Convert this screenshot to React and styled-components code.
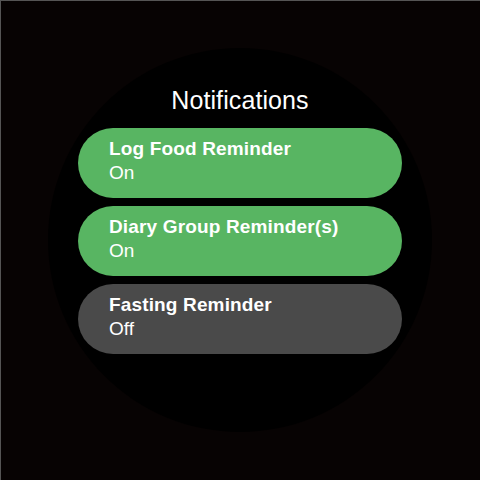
import React from 'react'
import styled, { createGlobalStyle } from 'styled-components'

const GlobalStyle = createGlobalStyle`
    html, body {
        margin: 0;
        padding: 0;
        background: #070303;
    }
    * {
        box-sizing: border-box;
    }
`

const Screen = styled.div`
    width: 480px;
    height: 480px;
    background-color: #070303;
    box-shadow: inset 1px 1px 0 #555555;
    display: flex;
    align-items: center;
    justify-content: center;
    font-family: "Liberation Sans", Arial, sans-serif;
`

const WatchFace = styled.div`
    width: 384px;
    height: 384px;
    border-radius: 50%;
    background-color: #000000;
    display: flex;
    flex-direction: column;
    align-items: center;
    padding-top: 38px;
`

const Title = styled.h1`
    margin: 0 0 14px;
    color: #ffffff;
    font-size: 25px;
    font-weight: 400;
    line-height: 28px;
    letter-spacing: 0.1px;
`

const List = styled.div`
    display: flex;
    flex-direction: column;
    gap: 8px;
`

const Chip = styled.button`
    width: 324px;
    height: 70px;
    border: none;
    border-radius: 35px;
    padding: 9px 31px 0;
    display: flex;
    flex-direction: column;
    align-items: flex-start;
    background-color: ${props => (props.$enabled ? '#58b562' : '#4a4a4a')};
    color: #ffffff;
    font-family: inherit;
    text-align: left;
    cursor: pointer;
`

const Label = styled.span`
    font-size: 19px;
    font-weight: 700;
    line-height: 24px;
    letter-spacing: 0.15px;
`

const Value = styled.span`
    font-size: 19px;
    font-weight: 400;
    line-height: 24px;
`

const reminders = [
    { label: 'Log Food Reminder', enabled: true },
    { label: 'Diary Group Reminder(s)', enabled: true },
    { label: 'Fasting Reminder', enabled: false },
]

export default function App() {
    return (
        <>
            <GlobalStyle />
            <Screen>
                <WatchFace>
                    <Title>Notifications</Title>
                    <List>
                        {reminders.map(item => (
                            <Chip key={item.label} $enabled={item.enabled}>
                                <Label>{item.label}</Label>
                                <Value>{item.enabled ? 'On' : 'Off'}</Value>
                            </Chip>
                        ))}
                    </List>
                </WatchFace>
            </Screen>
        </>
    )
}
